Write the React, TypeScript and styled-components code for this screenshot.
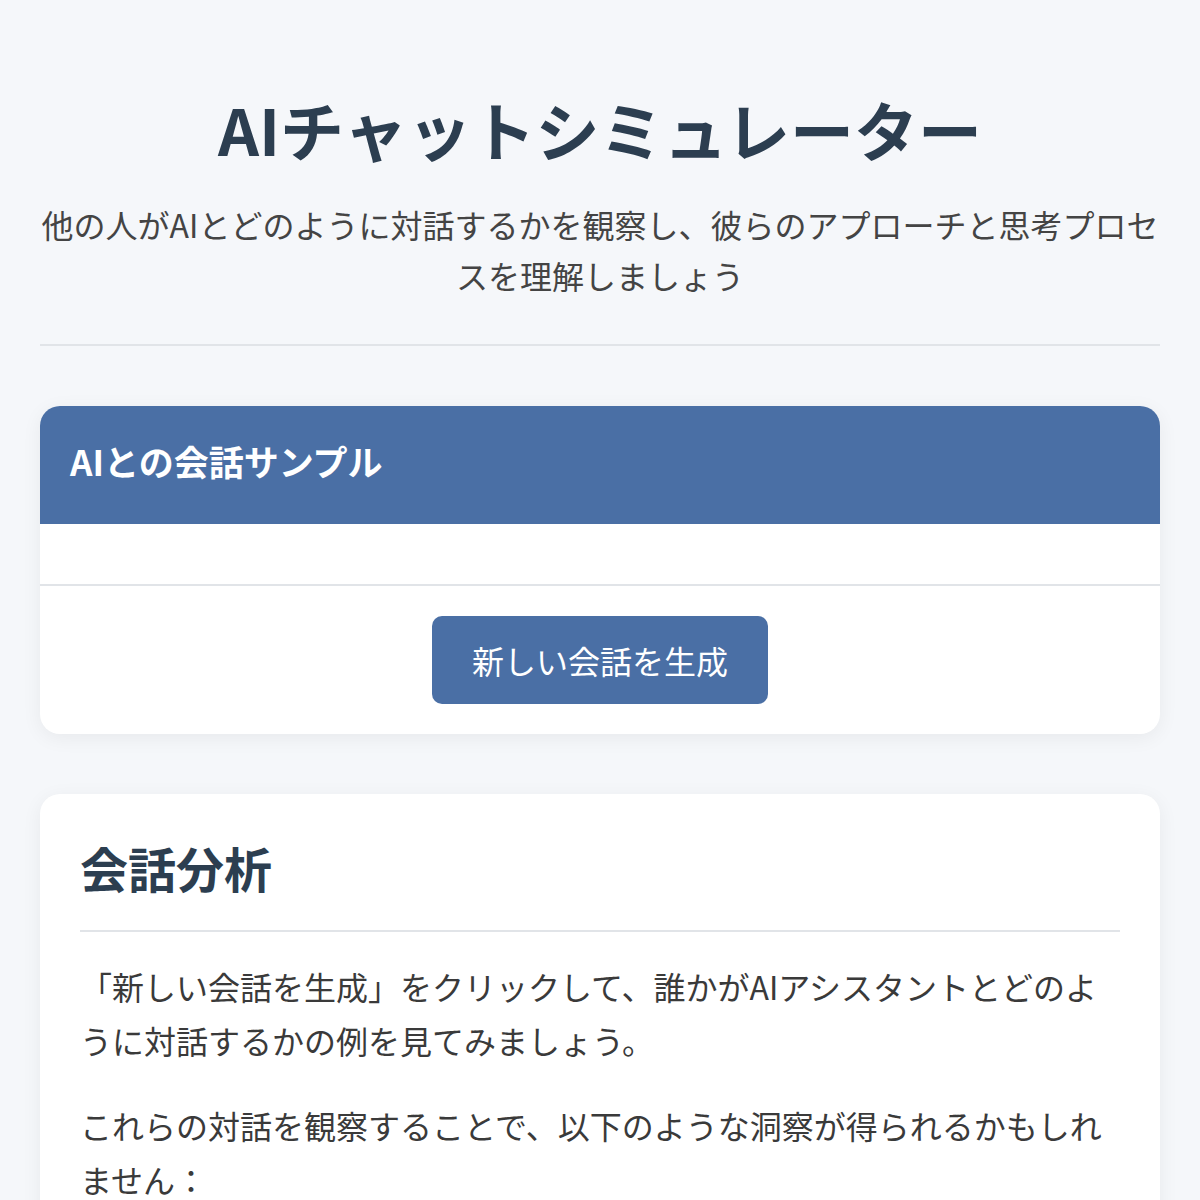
import styled, { createGlobalStyle } from 'styled-components';

const colors = {
  page: '#f5f7fa',
  ink: '#2c3e50',
  text: '#3a3a3a',
  primary: '#4a6fa5',
  rule: '#e1e4e8',
  white: '#ffffff',
};

const GlobalStyle = createGlobalStyle`
  html, body {
    margin: 0;
    padding: 0;
    background: ${colors.page};
  }
  body {
    font-family: "Noto Sans CJK JP", "Noto Sans", sans-serif;
    color: ${colors.text};
  }
  * {
    box-sizing: border-box;
  }
`;

function App() {
  return (
    <>
      <GlobalStyle />
      <StyledPage>
        <StyledHeader>
          <StyledTitle>AIチャットシミュレーター</StyledTitle>
          <StyledSubtitle>
            他の人がAIとどのように対話するかを観察し、彼らのアプローチと思考プロセスを理解しましょう
          </StyledSubtitle>
        </StyledHeader>

        <StyledChatCard>
          <StyledChatHeader>
            <StyledChatTitle>AIとの会話サンプル</StyledChatTitle>
          </StyledChatHeader>
          <StyledMessages />
          <StyledControls>
            <StyledButton type="button">新しい会話を生成</StyledButton>
          </StyledControls>
        </StyledChatCard>

        <StyledAnalysisCard>
          <StyledSectionTitle>会話分析</StyledSectionTitle>
          <StyledParagraph>
            「新しい会話を生成」をクリックして、誰かがAIアシスタントとどのように対話するかの例を見てみましょう。
          </StyledParagraph>
          <StyledParagraph>
            これらの対話を観察することで、以下のような洞察が得られるかもしれません：
          </StyledParagraph>
          <StyledList>
            <li>質問の仕方や言い回しの工夫</li>
            <li>AIの回答に対するフォローアップの方法</li>
          </StyledList>
        </StyledAnalysisCard>
      </StyledPage>
    </>
  );
}

const StyledPage = styled.div`
  max-width: 1200px;
  margin: 0 auto;
  padding: 90px 40px 40px;
`;

const StyledHeader = styled.header`
  text-align: center;
  padding-bottom: 40px;
  border-bottom: 2px solid ${colors.rule};
  margin-bottom: 60px;
`;

const StyledTitle = styled.h1`
  margin: 0 0 32px;
  font-size: 64px;
  line-height: 76.8px;
  font-weight: 700;
  color: ${colors.ink};
`;

const StyledSubtitle = styled.p`
  margin: 0 0 3px;
  font-size: 32px;
  line-height: 51.2px;
  color: #444;
`;

const StyledCard = styled.section`
  background: ${colors.white};
  border-radius: 20px;
  box-shadow: 0 4px 20px rgba(0, 0, 0, 0.06);
  overflow: hidden;
`;

const StyledChatCard = styled(StyledCard)`
  margin-bottom: 60px;
`;

const StyledChatHeader = styled.div`
  background: ${colors.primary};
  padding: 26px 30px 34px;
`;

const StyledChatTitle = styled.h2`
  margin: 0;
  font-size: 35px;
  line-height: 58px;
  font-weight: 700;
  color: ${colors.white};
`;

const StyledMessages = styled.div`
  height: 62px;
  border-bottom: 2px solid ${colors.rule};
`;

const StyledControls = styled.div`
  display: flex;
  justify-content: center;
  padding: 30px;
`;

const StyledButton = styled.button`
  height: 88px;
  padding: 0 40px;
  border: none;
  border-radius: 10px;
  background: ${colors.primary};
  color: ${colors.white};
  font-family: inherit;
  font-size: 32px;
  line-height: 1;
  cursor: pointer;
`;

const StyledAnalysisCard = styled(StyledCard)`
  padding: 40px;
`;

const StyledSectionTitle = styled.h2`
  margin: 0 0 27px;
  padding-bottom: 30px;
  border-bottom: 2px solid ${colors.rule};
  font-size: 48px;
  line-height: 66px;
  font-weight: 700;
  color: ${colors.ink};
`;

const StyledParagraph = styled.p`
  margin: 0 0 31px;
  font-size: 32px;
  line-height: 54px;
`;

const StyledList = styled.ul`
  margin: 0;
  padding-left: 40px;
  font-size: 32px;
  line-height: 54px;
`;

export default App;
